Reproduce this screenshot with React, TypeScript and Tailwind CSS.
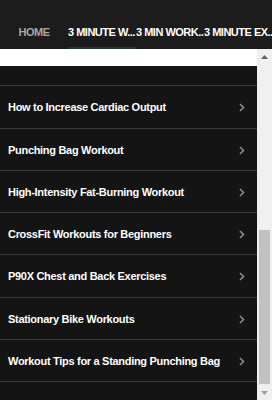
const items = [
  { label: "How to Increase Cardiac Output", h: "h-[43px]" },
  { label: "Punching Bag Workout", h: "h-[42px]" },
  { label: "High-Intensity Fat-Burning Workout", h: "h-[42px]" },
  { label: "CrossFit Workouts for Beginners", h: "h-[42px]" },
  { label: "P90X Chest and Back Exercises", h: "h-[43px]" },
  { label: "Stationary Bike Workouts", h: "h-[42px]" },
  { label: "Workout Tips for a Standing Punching Bag", h: "h-[42px]" },
];

const tabs = ["HOME", "3 MINUTE W...", "3 MIN WORK..", "3 MINUTE EX..."];

export default function App() {
  return (
    <div className="w-[272px] h-[400px] overflow-hidden flex flex-col bg-[#1c1c1c] font-['Liberation_Sans',Arial,sans-serif]">
      {/* tab bar */}
      <div className="h-[49px] shrink-0 flex items-end bg-[#1c1c1c]">
        {tabs.map((t, i) => (
          <div key={t} className="w-[68px] shrink-0 h-[49px] flex flex-col">
            <div
              className={
                "flex-1 flex items-center pt-[18px] whitespace-nowrap overflow-visible text-[11px] font-bold tracking-[-0.5px] " +
                (i === 0 ? "justify-center text-[#a8a8a8]" : "text-white")
              }
            >
              {t}
            </div>
            <div className={"h-[2px] " + (i === 1 ? "bg-[#1e3b32]" : "bg-transparent")} />
          </div>
        ))}
      </div>

      <div className="flex-1 flex min-h-0">
        {/* list area */}
        <div className="flex-1 flex flex-col bg-white pt-[17px]">
          <div className="flex-1 bg-[#141414] flex flex-col">
            <div className="h-[19px] shrink-0" />
            {items.map(({ label, h }) => (
              <div
                key={label}
                className={h + " shrink-0 border-t border-[#383838] flex items-center justify-between pl-[8px] pr-[12px] pt-[1px]"}
              >
                <span className="text-white text-[11px] font-bold tracking-[-0.3px]">{label}</span>
                <svg width="6" height="9" viewBox="0 0 6 9" className="text-[#8a8a8a]">
                  <path d="M1 1 L4.5 4.5 L1 8" fill="none" stroke="currentColor" strokeWidth="1.6" />
                </svg>
              </div>
            ))}
            <div className="flex-1 border-t border-[#383838]" />
          </div>
        </div>

        {/* scrollbar */}
        <div className="w-[15px] shrink-0 bg-[#f0f0f0] flex flex-col items-center">
          <div className="h-[15px] w-full flex items-center justify-center">
            <svg width="7" height="4" viewBox="0 0 7 4">
              <path d="M0 4 L3.5 0 L7 4 Z" fill="#606060" />
            </svg>
          </div>
          <div className="flex-1 w-full flex flex-col px-[2px]">
            <div className="h-[166px] shrink-0" />
            <div className="h-[154px] bg-[#c1c1c1]" />
          </div>
          <div className="h-[15px] w-full flex items-center justify-center">
            <svg width="7" height="4" viewBox="0 0 7 4">
              <path d="M0 0 L3.5 4 L7 0 Z" fill="#a0a0a0" />
            </svg>
          </div>
        </div>
      </div>
    </div>
  );
}
